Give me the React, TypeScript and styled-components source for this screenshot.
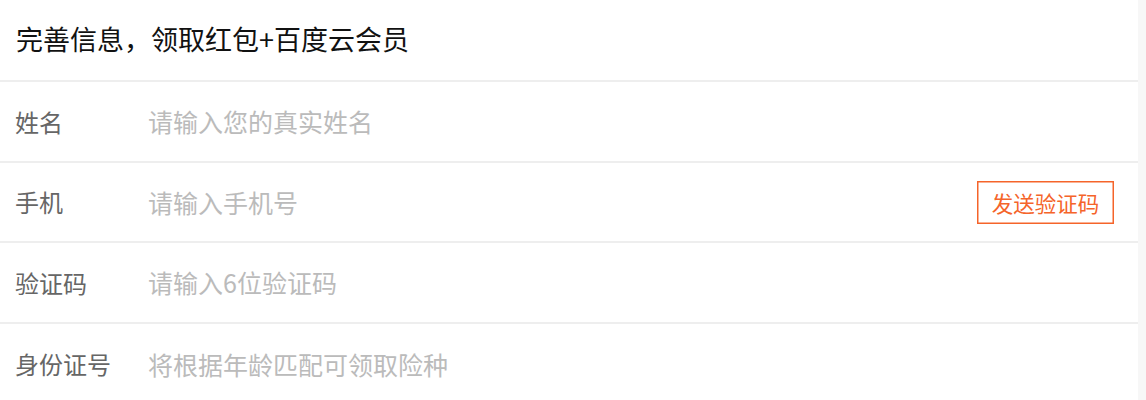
import React from "react";
import styled, { createGlobalStyle } from "styled-components";

const Global = createGlobalStyle`
  html, body { margin: 0; padding: 0; background: #f7f7f7; }
  body { font-family: "Microsoft YaHei", "Noto Sans CJK SC", "Noto Sans", sans-serif; }
`;

const Panel = styled.div`
  width: 1138px;
  background: #fff;
  height: 400px;
  overflow: hidden;
`;

const Title = styled.div`
  display: flex;
  align-items: center;
  padding-left: 16px;
  font-size: 27px;
  color: #111;
  border-bottom: 2px solid #eeeeee;
  box-sizing: border-box;
  height: 82px;
  padding-bottom: 4px;
`;

const Row = styled.div`
  height: 80.5px;
  box-sizing: border-box;
  display: flex;
  align-items: center;
  padding-left: 15px;
  padding-right: 24px;
  border-bottom: 2px solid #eeeeee;
  &:last-child { border-bottom: none; }
`;

const Label = styled.span`
  min-width: 96px;
  margin-right: 37px;
  font-size: 24px;
  color: #666;
  white-space: nowrap;
`;

const Input = styled.input`
  flex: 1;
  border: none;
  outline: none;
  background: transparent;
  font-family: inherit;
  font-size: 25px;
  color: #333;
  padding: 0;
  &::placeholder { color: #bbbbbb; }
`;

const SendButton = styled.button`
  width: 137px;
  height: 43px;
  border: 1px solid #f5642a;
  box-shadow: inset 0 0 0 0.5px #f5642a;
  background: #fff;
  color: #f5642a;
  font-family: inherit;
  font-size: 21.5px;
  padding: 0;
  margin-top: 2px;
  cursor: pointer;
`;

const fields = [
  { label: "姓名", placeholder: "请输入您的真实姓名" },
  { label: "手机", placeholder: "请输入手机号", send: true },
  { label: "验证码", placeholder: "请输入6位验证码" },
  { label: "身份证号", placeholder: "将根据年龄匹配可领取险种" },
];

export default function App() {
  return (
    <>
      <Global />
      <Panel>
        <Title>完善信息，领取红包+百度云会员</Title>
        {fields.map((f) => (
          <Row key={f.label}>
            <Label>{f.label}</Label>
            <Input placeholder={f.placeholder} />
            {f.send && <SendButton>发送验证码</SendButton>}
          </Row>
        ))}
      </Panel>
    </>
  );
}
